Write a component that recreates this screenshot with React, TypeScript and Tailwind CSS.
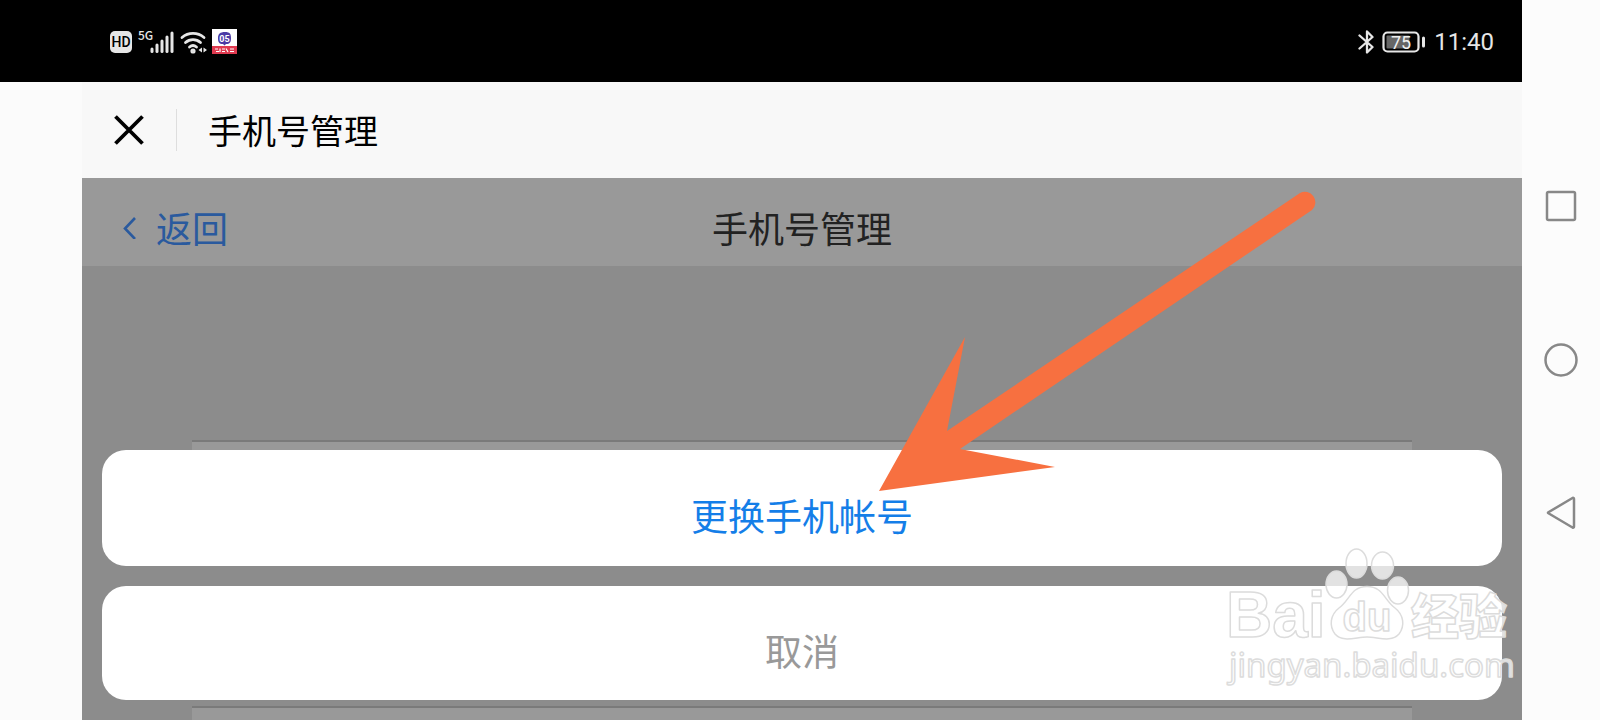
const SIGNAL_BARS = [
  { x: 13, y: 19 },
  { x: 18, y: 15 },
  { x: 23, y: 11 },
  { x: 28, y: 7 },
  { x: 33, y: 3 },
];

const StatusBar = () => (
  <div className="h-[82px] shrink-0 bg-black text-[#e6e6e6] flex items-center justify-between pl-[110px] pr-7 pt-px">
    <div className="flex items-center">
      <svg className="w-[22px] h-[22px]" viewBox="0 0 22 22">
        <rect width="22" height="22" rx="5" fill="#e6e6e6" />
        <text x="11" y="16" textAnchor="middle" fontSize="14" fontWeight="500" fontFamily="Roboto, sans-serif" fill="#000">
          HD
        </text>
      </svg>
      <svg className="w-9 h-6 ml-1.5 overflow-visible" viewBox="0 0 36 24">
        <text x="0" y="10" fontSize="12" fontWeight="500" fontFamily="'Noto Sans CJK SC', sans-serif" fill="#e6e6e6">
          5G
        </text>
        {SIGNAL_BARS.map(({ x, y }) => (
          <path key={x} d={`M${x + 1} ${y}V21.5`} stroke="#e6e6e6" strokeWidth="3" strokeLinecap="round" />
        ))}
      </svg>
      <svg className="w-7 h-6 ml-1.5" viewBox="0 0 28 24" fill="none" stroke="#e6e6e6" strokeWidth="2.8" strokeLinecap="round">
        <path d="M2 7.500a17 17 0 0 1 22 0" />
        <path d="M5.500 12.500a11 11 0 0 1 15 0" />
        <path d="M9.500 17a5.500 5.500 0 0 1 7 0" />
        <circle cx="13" cy="21" r="1.200" />
        <path d="M22 17.500v5l-3.500-2.500zM23.500 17.500v5l3.500-2.500z" fill="#e6e6e6" stroke="none" />
      </svg>
      <svg className="w-[25px] h-[25px] ml-1" viewBox="0 0 25 25">
        <rect width="25" height="25" fill="#fff" />
        <path d="M13 3c5 0 6 2 6 6s-1 6-5 6l-1.500 1.500-1.500-1.500c-4 0-5-2-5-6s2-6 7-6z" fill="#4b3ba5" />
        <text x="12.500" y="12.500" textAnchor="middle" fontSize="9" fontWeight="700" fontFamily="Roboto, sans-serif" fill="#fff">
          05
        </text>
        <rect y="17" width="25" height="8" fill="#e03a50" />
        <path d="M3 20h3M4 22.500h3M8 19.500v3.500M10 20h3M10 22.500h3M14 19.500l2 3.500M18 20h4M18 22.500h4" stroke="#fff" strokeWidth="1.200" />
      </svg>
    </div>
    <div className="flex items-center">
      <svg className="w-4 h-6" viewBox="0 0 16 24" fill="none" stroke="#e6e6e6" strokeWidth="2.300" strokeLinejoin="round" strokeLinecap="round">
        <path d="M1.500 5.500l13 11.500-5.500 5.500V1.500l5.500 5.500-13 11.500" />
      </svg>
      <svg className="w-11 h-[22px] ml-2" viewBox="0 0 44 22">
        <rect x="1.500" y="1.500" width="35" height="19" rx="4" fill="none" stroke="#e6e6e6" strokeWidth="2.200" />
        <rect x="4.500" y="4.500" width="23" height="13" rx="1" fill="#666" />
        <rect x="40" y="5.500" width="3" height="11" rx="1.500" fill="#e6e6e6" />
        <text x="19" y="17.500" textAnchor="middle" fontSize="18" fontFamily="Roboto, sans-serif" fill="#f0f0f0">
          75
        </text>
      </svg>
      <time className="ml-2 font-[Roboto,sans-serif] text-[24px] leading-8">11:40</time>
    </div>
  </div>
);

const TitleBar = () => (
  <header className="h-24 shrink-0 bg-[#f8f8f8] flex items-center pl-[31px] text-black">
    <button aria-label="关闭" className="w-8 h-8 flex items-center justify-center">
      <svg className="w-8 h-8" viewBox="0 0 32 32" stroke="#000" strokeWidth="3.800">
        <path d="M2.500 2.500l27 27M29.500 2.500l-27 27" />
      </svg>
    </button>
    <div className="w-px h-[42px] bg-[#dedede] ml-[31px] mr-[31px]" />
    <h1 className="text-[34px] leading-[48px]">手机号管理</h1>
  </header>
);

const PageHeader = () => (
  <div className="h-[88px] shrink-0 bg-[#999] grid grid-cols-3 items-center pt-2.5 text-[36px] leading-[48px]">
    <a href="#back" className="flex items-center pl-10 text-[#2a5a9e]">
      <svg className="w-4 h-6 mr-[18px]" viewBox="0 0 16 24" fill="none" stroke="#2a5a9e" strokeWidth="2.600">
        <path d="M13 3L3 13.500 13 24" />
      </svg>
      返回
    </a>
    <h2 className="text-center text-[#222]">手机号管理</h2>
  </div>
);

const ActionSheet = () => (
  <div role="dialog" className="absolute inset-x-0 bottom-0 flex flex-col gap-5 p-5 text-[37px] leading-[48px]">
    <button className="h-[116px] rounded-3xl bg-white pt-3.5 text-[#147ee8]">更换手机帐号</button>
    <button className="h-[114px] rounded-3xl bg-white pt-3.5 text-[#999]">取消</button>
  </div>
);

const Arrow = () => (
  <svg className="absolute left-1/2 top-0 ml-[77px] w-[440px] h-[314px] pointer-events-none" viewBox="879 178 440 314">
    <path d="M879 491L965 337L947 431L1300 193A10.500 10.500 0 0 1 1312 210L960 449L1055 467Z" fill="#f77040" />
  </svg>
);

const Watermark = () => (
  <svg
    className="absolute right-0 bottom-[30px] w-[300px] h-[146px] pointer-events-none"
    viewBox="1222 544 300 146"
    fill="#fff"
    fillOpacity="0.75"
    stroke="#dcdcdc"
    strokeWidth="1.500"
    strokeLinejoin="round"
  >
    <ellipse cx="1336.500" cy="584.500" rx="10.500" ry="13.500" />
    <ellipse cx="1356.500" cy="563.500" rx="10.500" ry="14.500" />
    <ellipse cx="1382.500" cy="565.500" rx="11" ry="13.500" />
    <ellipse cx="1398" cy="590.500" rx="10.500" ry="13.500" />
    <path d="M1367 586.500C1351 586.500 1350 600 1339 608C1330 615 1329 626 1335 634C1343 643 1356 637 1367 637C1378 637 1391 643 1399 634C1405 626 1404 615 1395 608C1384 600 1383 586.500 1367 586.500Z" />
    <g fontFamily="'Liberation Sans', sans-serif">
      <text x="1226" y="637" fontSize="64" fontWeight="700">
        Bai
      </text>
      <text x="1367" y="631" fontSize="40" textAnchor="middle" fontWeight="700">
        du
      </text>
    </g>
    <text x="1411" y="634" fontSize="48" fontWeight="900" fontFamily="'Noto Sans CJK SC', sans-serif">
      经验
    </text>
    <text x="1229" y="677" fontSize="33" fontFamily="'Noto Sans', 'Open Sans', sans-serif">
      jingyan.baidu.com
    </text>
  </svg>
);

const SystemNav = () => (
  <nav className="w-[78px] shrink-0 flex flex-col items-center justify-center bg-[#fcfcfc]">
    <button aria-label="最近任务" className="w-full h-[154px] flex items-center justify-center">
      <svg className="w-9 h-9" viewBox="0 0 36 36" fill="none" stroke="#888" strokeWidth="2.500">
        <rect x="4" y="4" width="28" height="28" rx="1.500" />
      </svg>
    </button>
    <button aria-label="主屏幕" className="w-full h-[154px] flex items-center justify-center">
      <svg className="w-9 h-9" viewBox="0 0 36 36" fill="none" stroke="#888" strokeWidth="2.500">
        <circle cx="18" cy="18" r="15.500" />
      </svg>
    </button>
    <button aria-label="返回" className="w-full h-[154px] flex items-center justify-center">
      <svg className="w-9 h-9" viewBox="0 0 36 36" fill="none" stroke="#888" strokeWidth="2.500" strokeLinejoin="round">
        <path d="M5 16.500L29.500 2Q31 1.500 31 3V30.500Q31 32 29.500 31.500L5 17z" />
      </svg>
    </button>
  </nav>
);

const App = () => (
  <div className="flex min-h-screen bg-[#fbfbfb] font-['Noto_Sans_CJK_SC',sans-serif]">
    <div className="flex-1 min-w-0 flex flex-col">
      <StatusBar />
      <main className="flex-1 flex flex-col pl-[82px]">
        <TitleBar />
        <div className="relative flex-1 flex flex-col bg-[#8c8c8c]">
          <PageHeader />
          {/* Form rows dimmed behind the sheet */}
          <div className="flex-1 flex flex-col justify-between px-[110px] pt-[174px]">
            <div className="h-16 border-t-2 border-[#7a7a7a] bg-[#999]" />
            <div className="h-[14px] border-t-2 border-[#7a7a7a] bg-[#999]" />
          </div>
          <ActionSheet />
          <Arrow />
          <Watermark />
        </div>
      </main>
    </div>
    <SystemNav />
  </div>
);

export default App;
